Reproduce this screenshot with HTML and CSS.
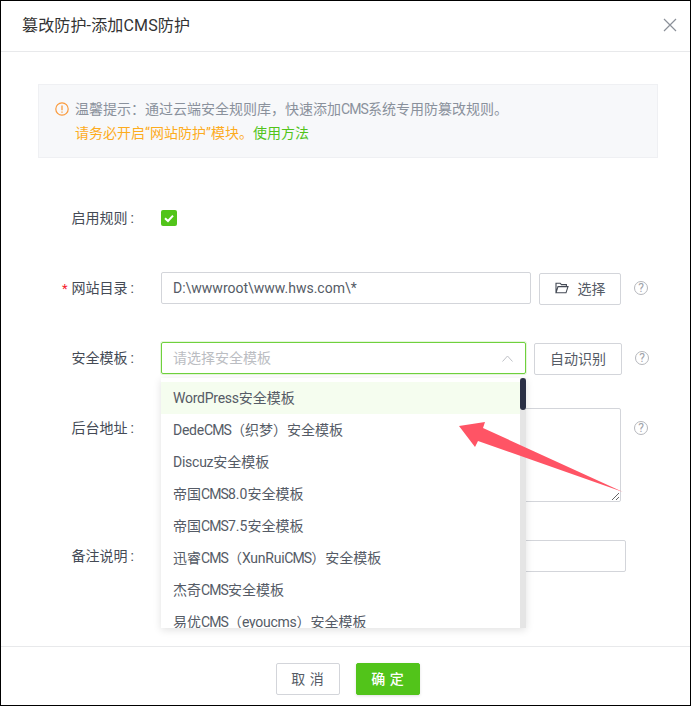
FILE: index.html
```
<!DOCTYPE html>
<html lang="zh-CN">
<head>
<meta charset="utf-8">
<title>篡改防护</title>
<link rel="stylesheet" href="styles.css">
</head>
<body>
<div class="modal">
  <header class="modal-head">
    <h1 class="modal-title">篡改防护-添加CMS防护</h1>
    <svg class="close" width="14" height="14" viewBox="0 0 14 14"><path d="M1 1L13 13M13 1L1 13" stroke="#8b9099" stroke-width="1.2" fill="none"/></svg>
  </header>
  <main class="modal-body">
    <div class="notice">
      <svg class="notice-icon" width="14" height="14" viewBox="0 0 14 14"><circle cx="7" cy="7" r="6.2" fill="none" stroke="#fa9a3c" stroke-width="1.2"/><path d="M7 3.4V8.2M7 9.6V10.8" stroke="#fa9a3c" stroke-width="1.3" fill="none"/></svg>
      <div class="notice-text">
        <p class="notice-line">温馨提示：通过云端安全规则库，快速添加<span class="caps">CMS</span>系统专用防篡改规则。</p>
        <p class="notice-warn">请务必开启“网站防护”模块。<span class="notice-link">使用方法</span></p>
      </div>
    </div>
    <div class="row row-check">
      <label class="label">启用规则<i class="colon">:</i></label>
      <span class="check"><svg width="16" height="16" viewBox="0 0 16 16"><path d="M4 8.2L7 11L12 5.6" stroke="#fff" stroke-width="2" fill="none"/></svg></span>
    </div>
    <div class="row row-dir">
      <label class="label"><b class="req">*</b>网站目录<i class="colon">:</i></label>
      <input class="input input-dir" value="D:\wwwroot\www.hws.com\*">
      <span class="btn btn-choose"><svg width="14" height="12" viewBox="0 0 14 12"><path d="M1 10.8V1.2H5.2L6.4 2.6H11.4V4.6M1 10.8H11L13 4.6H3L1 10.8Z" fill="none" stroke="#444a55" stroke-width="1.1"/></svg>选择</span>
      <span class="help">?</span>
    </div>
    <div class="row row-tpl">
      <label class="label">安全模板<i class="colon">:</i></label>
      <div class="select">
        <span class="placeholder">请选择安全模板</span>
        <svg width="11" height="7" viewBox="0 0 11 7"><path d="M0.5 6.5L5.5 1L10.5 6.5" fill="none" stroke="#bfc1c6" stroke-width="1"/></svg>
      </div>
      <span class="btn btn-auto">自动识别</span>
      <span class="help help-auto">?</span>
    </div>
    <div class="row row-admin">
      <label class="label label-top">后台地址<i class="colon">:</i></label>
      <textarea class="textarea"></textarea>
      <span class="help help-top">?</span>
    </div>
    <div class="row row-note">
      <label class="label">备注说明<i class="colon">:</i></label>
      <input class="input input-note">
    </div>
  </main>
  <footer class="modal-foot">
    <span class="btn btn-cancel">取 消</span>
    <span class="btn btn-ok">确 定</span>
  </footer>
  <div class="dropdown">
    <ul class="options">
      <li class="option option-active"><span class="lat">WordPress</span>安全模板</li>
      <li class="option"><span class="lat">Dede</span><span class="caps">CMS</span>（织梦）安全模板</li>
      <li class="option"><span class="lat">Discuz</span>安全模板</li>
      <li class="option">帝国<span class="caps">CMS</span>8.0安全模板</li>
      <li class="option">帝国<span class="caps">CMS</span>7.5安全模板</li>
      <li class="option">迅睿<span class="caps">CMS</span>（<span class="lat">XunRui</span><span class="caps">CMS</span>）安全模板</li>
      <li class="option">杰奇<span class="caps">CMS</span>安全模板</li>
      <li class="option">易优<span class="caps">CMS</span>（<span class="lat">eyoucms</span>）安全模板</li>
    </ul>
    <div class="scrollbar"><div class="thumb"></div></div>
  </div>
  <svg class="arrow" width="691" height="706" viewBox="0 0 691 706"><polygon points="459,426 485,422 483,428 623,492 478,441 475,447" fill="#ff5465"/></svg>
</div>
</body>
</html>
```
FILE: styles.css
```
* { box-sizing: border-box; }
html, body { margin: 0; padding: 0; background: #fff; }
body { font-family: Roboto, "Noto Sans CJK SC", sans-serif; font-size: 14px; color: #444a55; }
.caps { letter-spacing: -.9px; }
.lat { letter-spacing: -.25px; }
.modal { position: relative; width: 691px; height: 706px; border: 1px solid #000; display: flex; flex-direction: column; overflow: hidden; background: #fff; }
.modal-head { height: 51px; flex: none; display: flex; align-items: center; justify-content: space-between; padding: 0 13px 0 21px; border-bottom: 1px solid #e8e9eb; }
.modal-title { margin: 0; font-size: 16px; font-weight: 400; color: #333; line-height: 20px; letter-spacing: .15px; }
.close { display: block; margin-top: -2px; }
.modal-body { flex: 1; padding: 32px 32px 0 37px; }
.notice { height: 74px; width: 620px; display: flex; gap: 6px; padding: 12px 0 0 16px; background: #f7f8fa; border: 1px solid #eff0f3; }
.notice-icon { flex: none; margin-top: 5px; }
.notice-text { font-size: 14px; line-height: 24px; }
.notice-line { margin: 0; color: #8a919c; }
.notice-warn { margin: 0; color: #fdac1e; }
.notice-link { color: #52c41a; }
.row { display: flex; align-items: center; }
.row-check { height: 32px; margin-top: 44px; }
.row-dir { height: 32px; margin-top: 38px; }
.row-tpl { height: 32px; margin-top: 38px; }
.row-admin { height: 94px; margin-top: 34px; align-items: flex-start; }
.row-note { height: 32px; margin-top: 38px; }
.label { width: 96px; margin-right: 27px; flex: none; text-align: right; color: #444a55; line-height: 20px; }
.label-top { margin-top: 10px; }
.colon { font-style: normal; margin-left: 3px; }
.req { font-weight: 400; color: #f5222d; margin-right: 4px; font-size: 13px; }
.check { width: 16px; height: 16px; background: #52c41a; border-radius: 2px; display: block; }
.check svg { display: block; }
.input { height: 32px; border: 1px solid #d3d5da; border-radius: 2px; padding: 0 11px; font: inherit; color: #555b66; background: #fff; outline: none; }
.input-dir { width: 370px; }
.input-note { width: 465px; }
.btn { display: flex; align-items: center; justify-content: center; height: 32px; padding-bottom: 3px; border: 1px solid #d3d5da; border-radius: 2px; background: #fff; color: #555b66; flex: none; }
.btn-choose { width: 82px; margin-left: 8px; margin-top: 2px; gap: 9px; }
.btn-auto { width: 88px; margin-left: 8px; margin-top: 2px; }
.help { width: 14px; height: 14px; border: 1px solid #b5b7bc; border-radius: 50%; color: #a0a3a9; font-size: 12px; line-height: 12px; text-align: center; margin-left: 13px; flex: none; }
.help-auto { margin-left: 13px; }
.help-top { margin-top: 13px; }
.select { width: 365px; height: 32px; flex: none; display: flex; align-items: center; justify-content: space-between; padding: 0 12px 0 11px; border: 1px solid #6fd13d; border-radius: 2px; box-shadow: 0 0 0 1px #e6f6dc; }
.placeholder { color: #bbbdc2; margin-top: -2px; }
.textarea { width: 460px; height: 94px; flex: none; border: 1px solid #d3d5da; border-radius: 2px; font: inherit; outline: none; padding: 6px 11px; background: #fff; }
.modal-foot { height: 59px; flex: none; display: flex; justify-content: center; gap: 16px; padding: 16px 0 0 4px; border-top: 1px solid #e8e9eb; }
.btn-cancel { width: 64px; word-spacing: 1px; }
.btn-ok { width: 64px; background: #52c41a; border-color: #52c41a; color: #fff; font-weight: 500; word-spacing: 1px; box-shadow: 0 1px 3px rgba(0,0,0,.12); }
.dropdown { position: absolute; left: 160px; top: 377px; width: 365px; height: 250px; display: flex; background: #fff; box-shadow: 0 2px 8px rgba(0,0,0,.12); }
.options { list-style: none; margin: 0; padding: 4px 0 0; flex: 1; min-width: 0; overflow: hidden; }
.option { height: 32px; line-height: 33px; padding-left: 12px; white-space: nowrap; color: #555b66; }
.option-active { background: #f5fdef; }
.scrollbar { width: 6px; flex: none; background: #e5e5e5; }
.thumb { height: 32px; background: #2a2f45; border-radius: 3px; }
.arrow { position: absolute; left: -1px; top: -1px; pointer-events: none; }
```
